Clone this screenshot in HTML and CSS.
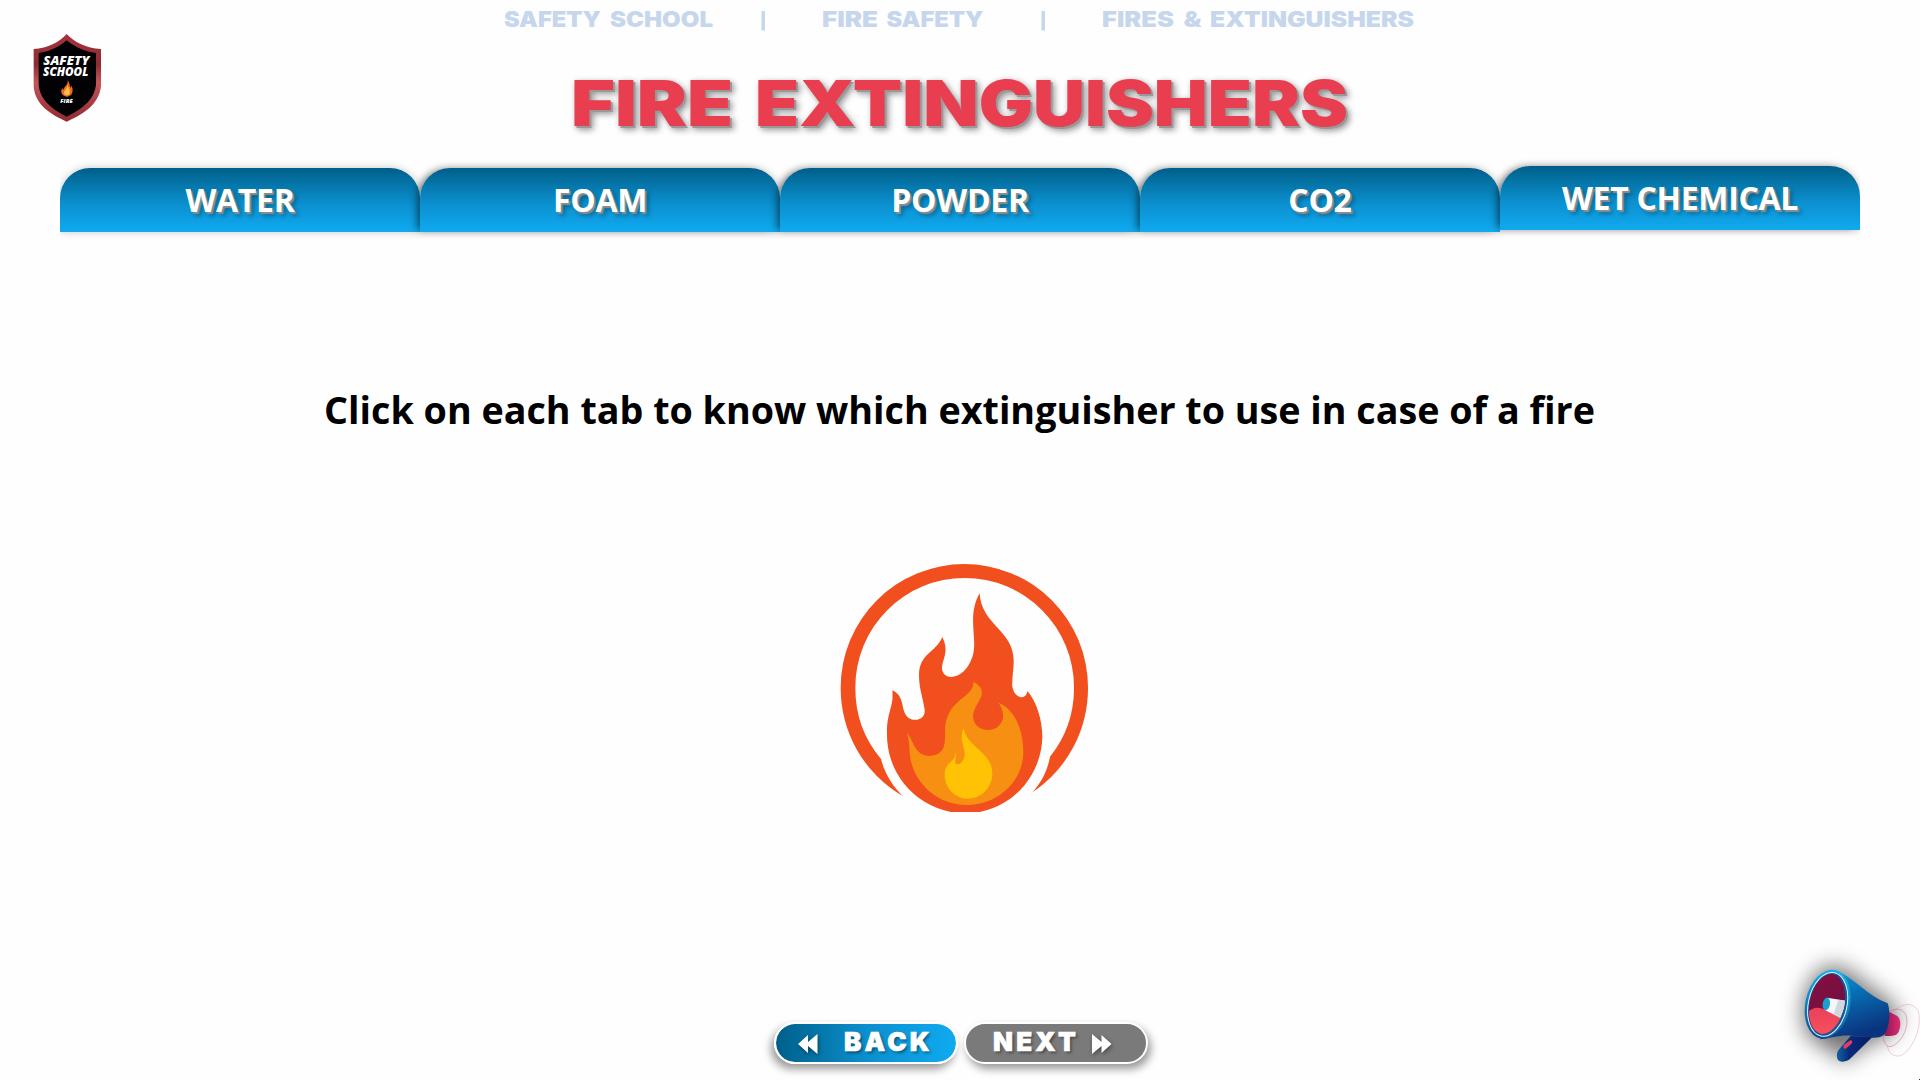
FILE: index.html
```html
<!DOCTYPE html>
<html lang="en">
<head>
<meta charset="utf-8">
<title>Fire Extinguishers</title>
<link rel="stylesheet" href="styles.css">
</head>
<body>
<div class="page">
  <header class="header">
    <svg class="logo" viewBox="0 0 300 330" width="100" height="110">
      <defs>
        <linearGradient id="rim" x1="0" y1="0" x2="0" y2="1">
          <stop offset="0" stop-color="#a8323c"/><stop offset=".35" stop-color="#8e2c33"/>
          <stop offset=".55" stop-color="#c4555b"/><stop offset="1" stop-color="#8f2a30"/>
        </linearGradient>
      </defs>
      <path d="M140 42C164 67 198 84 243 87V196C240 243 204 278 140 305C77 278 42 243 41 196V87C84 84 117 67 140 42Z" fill="url(#rim)"/>
      <path d="M140 61C165 82 196 96 228 99V194C224 233 196 263 140 290C86 263 59 233 56 194V99C86 96 116 82 140 61Z" fill="#020204"/>
      <g class="logo-text" fill="#fff">
        <text x="70" y="134" font-size="34" textLength="138" lengthAdjust="spacingAndGlyphs">SAFETY</text>
        <text x="69" y="167" font-size="34" textLength="136" lengthAdjust="spacingAndGlyphs">SCHOOL</text>
        <text x="121" y="249" font-size="14" textLength="37" lengthAdjust="spacingAndGlyphs">FIRE</text>
      </g>
      <path d="M143 180C150 190 148 197 153 204L154 196C162 211 158 229 141 230C124 229 120 214 127 205L131 211C129 200 146 196 143 180Z" fill="#ee6a1c"/>
      <path d="M142 196C147 206 151 211 149 220C145 229 134 227 132 219C131 212 142 208 142 196Z" fill="#ffc04a"/>
    </svg>
    <div class="heading">
      <svg class="crumbs" viewBox="500 0 920 38" width="920" height="38">
        <text y="27"><tspan x="504" textLength="97" lengthAdjust="spacingAndGlyphs">SAFETY</tspan> <tspan x="610" textLength="103" lengthAdjust="spacingAndGlyphs">SCHOOL</tspan></text>
        <rect x="761.500" y="11" width="3.500" height="19.500"/>
        <text y="27"><tspan x="822" textLength="56" lengthAdjust="spacingAndGlyphs">FIRE</tspan> <tspan x="886.500" textLength="97" lengthAdjust="spacingAndGlyphs">SAFETY</tspan></text>
        <rect x="1041.500" y="11" width="3.500" height="19.500"/>
        <text y="27"><tspan x="1102" textLength="72" lengthAdjust="spacingAndGlyphs">FIRES</tspan> <tspan x="1183.500" textLength="18" lengthAdjust="spacingAndGlyphs">&amp;</tspan> <tspan x="1210" textLength="204" lengthAdjust="spacingAndGlyphs">EXTINGUISHERS</tspan></text>
      </svg>
      <svg class="title" viewBox="560 38 800 120" width="800" height="120">
        <text y="126"><tspan x="571" textLength="162" lengthAdjust="spacingAndGlyphs">FIRE</tspan> <tspan x="755" textLength="593" lengthAdjust="spacingAndGlyphs">EXTINGUISHERS</tspan></text>
      </svg>
    </div>
  </header>

  <nav class="tabs">
    <a class="tab">WATER</a>
    <a class="tab">FOAM</a>
    <a class="tab">POWDER</a>
    <a class="tab">CO2</a>
    <a class="tab tab-raised">WET CHEMICAL</a>
  </nav>

  <main class="content">
    <p class="message">Click on each tab to know which extinguisher to use in case of a fire</p>
    <svg class="flame" viewBox="0 0 870 840" width="290" height="280">
      <path d="M248 738A374 374 0 0 1 62 413A371 371 0 0 1 433 42A371 371 0 0 1 804 413A374 374 0 0 1 637 727C662 700 682 665 690 620A330 330 0 0 0 762 413A328 328 0 0 0 434 84A328 328 0 0 0 106 413A330 330 0 0 0 183 627C195 674 220 710 248 738Z" fill="#f1501e"/>
      <path d="M479 130C484 225 579 240 581 330C582 355 575 385 577 410C584 447 619 452 622 423C650 455 667 510 667 562A233 235 0 0 1 480 786H392A236 236 0 0 1 201 548C201 483 222 470 217 421C258 440 239 481 265 503C289 519 317 504 314 479C308 440 297 415 297 375C298 310 347 308 367 261C390 307 364 331 366 358C372 390 413 388 440 354C492 285 431 217 479 130Z" fill="#f1501e"/>
      <path d="M461 395C518 430 459 457 459 501C464 556 554 553 549 492C548 479 543 468 535 458C590 480 610 549 610 607C610 694 532 765 440 765C345 765 273 689 269 607C268 585 267 569 261 549C281 569 281 617 330 618C372 614 376 590 375 545C376 444 460 448 461 395Z" fill="#f78f12"/>
      <path d="M431 533C437 590 517 604 517 670C517 713 484 746 444 746C406 746 374 714 374 674C374 636 408 634 407 608C412 620 402 632 408 642C426 646 435 626 434 607C431 580 417 568 431 533Z" fill="#ffc204"/>
    </svg>
  </main>

  <footer class="footer">
    <a class="btn btn-back">
      <svg class="arrows" viewBox="0 0 20 20" width="20" height="20"><path d="M0 10L10 1V8L19.500 0V20L10 12V19Z"/></svg>
      <span>BACK</span>
    </a>
    <a class="btn btn-next">
      <span>NEXT</span>
      <svg class="arrows" viewBox="0 0 20 20" width="20" height="20"><path d="M19.500 10L9.500 1V8L0 0V20L9.500 12V19Z"/></svg>
    </a>
  </footer>

  <svg class="megaphone" viewBox="0 0 480 450" width="160" height="150">
    <defs>
      <filter id="soft" x="-60%" y="-60%" width="220%" height="220%"><feGaussianBlur stdDeviation="34"/></filter>
      <linearGradient id="horn" x1="0" y1="0" x2=".35" y2="1">
        <stop offset="0" stop-color="#16a4dc"/><stop offset=".4" stop-color="#0873b7"/><stop offset="1" stop-color="#0a347f"/>
      </linearGradient>
      <linearGradient id="ring" x1="0" y1="0" x2="0" y2="1">
        <stop offset="0" stop-color="#18b4e6"/><stop offset=".6" stop-color="#0b7bb8"/><stop offset="1" stop-color="#174b91"/>
      </linearGradient>
      <linearGradient id="inner" x1="0" y1="0" x2="1" y2="1">
        <stop offset="0" stop-color="#85103f"/><stop offset="1" stop-color="#6c0d43"/>
      </linearGradient>
      <linearGradient id="red" x1="0" y1="0" x2="0" y2="1">
        <stop offset="0" stop-color="#e94259"/><stop offset="1" stop-color="#fa525d"/>
      </linearGradient>
      <linearGradient id="cap" x1="0" y1="0" x2="1" y2="0">
        <stop offset="0" stop-color="#8d1752"/><stop offset="1" stop-color="#df2a70"/>
      </linearGradient>
      <linearGradient id="handle" x1="0" y1="0" x2="1" y2="0">
        <stop offset="0" stop-color="#12629f"/><stop offset=".35" stop-color="#092a7b"/><stop offset="1" stop-color="#071c63"/>
      </linearGradient>
      <clipPath id="mouth"><ellipse cx="201" cy="222" rx="52" ry="91" transform="rotate(12 201 222)"/></clipPath>
    </defs>
    <path d="M220 105C290 120 320 180 385 205L420 265L380 325L320 340L250 400L225 370L150 325C110 280 125 120 220 105Z" fill="#000" opacity=".55" filter="url(#soft)"/>
    <path d="M272 318L337 321L272 385C260 398 236 398 232 386C229 375 231 364 238 357Z" fill="url(#handle)"/>
    <path d="M252 344L272 330C278 331 278 339 273 343L257 356C250 357 249 349 252 344Z" fill="#e33c63"/>
    <path d="M387 245L412 258C424 269 423 292 414 309C408 317 396 319 373 317Z" fill="url(#cap)"/>
    <path d="M225 120C285 144 320 197 383 220C392 244 389 294 372 315C350 331 312 319 274 317C236 315 211 325 181 328Z" fill="url(#horn)"/>
    <ellipse cx="203" cy="223" rx="67" ry="105" transform="rotate(12 203 223)" fill="url(#ring)"/>
    <ellipse cx="203" cy="223" rx="58" ry="97" transform="rotate(12 203 223)" fill="#10589b" stroke="#e3f5ff" stroke-width="3"/>
    <ellipse cx="201" cy="222" rx="52" ry="91" transform="rotate(12 201 222)" fill="url(#inner)"/>
    <g clip-path="url(#mouth)">
      <path d="M140 254C151 230 178 228 198 241L244 266V325H140Z" fill="url(#red)"/>
      <path d="M201 203L262 213L241 264L196 241Z" fill="#f4f6f8"/>
      <path d="M235 209L263 213L241 264L221 252Z" fill="#d2d7de"/>
    </g>
    <ellipse cx="199" cy="222" rx="11" ry="19" transform="rotate(9 199 222)" fill="#1a9fd2"/>
    <g fill="none" stroke="#d44b70" stroke-opacity=".65" stroke-width="2">
      <path d="M390 244C418 228 446 242 440 286C432 327 400 357 382 348C373 341 370 329 369 318"/>
      <path d="M399 247C421 220 458 214 474 242C488 283 463 354 423 377C399 382 386 369 382 348" stroke-opacity=".4"/>
    </g>
    <rect x="477" y="447" width="3" height="3" fill="#333"/>
  </svg>
</div>
</body>
</html>
```
FILE: styles.css
```css
* { box-sizing: border-box; }
body { margin: 0; background: #fefefe; font-family: "Open Sans", "Noto Sans", sans-serif; }
.page { position: relative; display: flex; flex-direction: column; width: 1920px; height: 1080px; overflow: hidden; }

.header { display: grid; grid-template-columns: 120px 1fr 120px; height: 168px; }
.logo { margin: 20px 0 0 20px; }
.logo-text { font-family: "Open Sans", sans-serif; font-weight: 800; font-style: italic; }
.heading { display: flex; flex-direction: column; align-items: center; }
.crumbs { display: block; font: 900 21.500px Inter, sans-serif; fill: #c5d6ed; }
.title { display: block; font: 900 63.500px Inter, sans-serif; fill: #e83e50; filter: drop-shadow(2px 2px .5px #999) drop-shadow(2px 2px 3px rgba(0, 0, 0, .4)); }

.tabs { display: grid; grid-template-columns: repeat(5, 360px); margin: 0 60px; height: 64px; clip-path: inset(-20px 0); }
.tab { display: flex; align-items: center; justify-content: center; height: 64px; border-radius: 30px 30px 0 0; background: linear-gradient(#005f89, #0b8fce 55%, #10aaf0); box-shadow: 0 0 8px rgba(0, 0, 0, .22); color: #fff; font-size: 32px; font-weight: 700; line-height: 64px; letter-spacing: -.3px; text-shadow: 2px 2px 1px #8d8d8d, 4px 4px 4px rgba(0, 0, 0, .3); }
.tab + .tab { box-shadow: 0 0 8px rgba(0, 0, 0, .22), -5px 0 9px -3px rgba(0, 0, 0, .5); }
.tab-raised { margin-top: -2px; }

.content { flex: 1; display: flex; flex-direction: column; align-items: center; }
.message { margin: 148px 0 0; padding-right: 1px; font-size: 37.680px; line-height: 60px; font-weight: 700; color: #000; white-space: nowrap; }
.flame { margin: 110px 0 0 10px; }

.footer { display: flex; justify-content: center; gap: 6px; height: 58px; padding-left: 2px; }
.btn { display: flex; align-items: center; width: 184px; height: 42px; border: 2px solid #fff; border-radius: 21px; color: #fff; font: 900 26px/38px Inter, sans-serif; letter-spacing: 3.200px; -webkit-text-stroke: .6px #fff; text-shadow: 2px 2px 3px rgba(0, 0, 0, .4); }
.btn-back { gap: 26px; padding-left: 22px; background: linear-gradient(90deg, #005f89, #0b8fce 50%, #10aaf0) padding-box; box-shadow: -3px 5px 8px rgba(0, 0, 0, .4); }
.btn-next { gap: 13px; padding-left: 27px; background: #7a7a7a; box-shadow: 3px 5px 8px rgba(0, 0, 0, .4); }
.arrows { fill: #fff; margin-top: 2px; filter: drop-shadow(1px 2px 2px rgba(0, 0, 0, .4)); }
.btn span { margin-top: -3px; }

.megaphone { position: absolute; right: 0; bottom: 0; overflow: visible; }
```
